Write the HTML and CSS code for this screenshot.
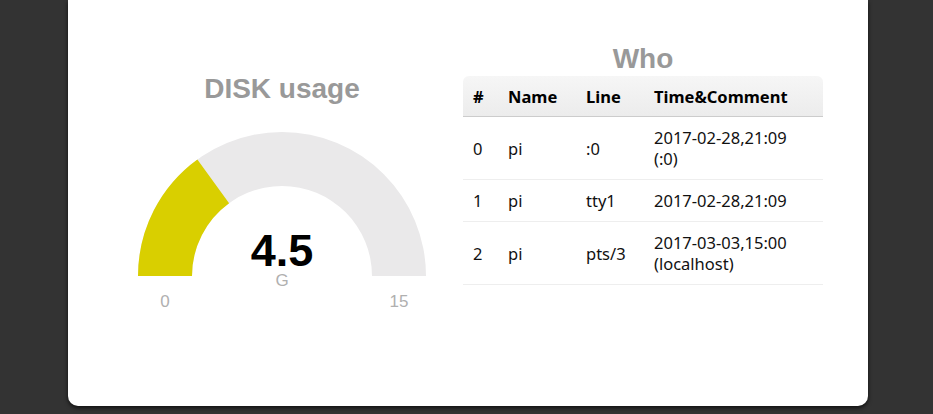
FILE: index.html
```html
<!DOCTYPE html>
<html>
<head>
<meta charset="utf-8">
<link rel="stylesheet" href="styles.css">
</head>
<body>
<div class="card">
  <section class="disk">
    <h2 class="title disk-title">DISK usage</h2>
    <svg class="gauge" width="300" height="190" viewBox="0 0 300 190">
      <path d="M6 150 A144 144 0 0 1 294 150 L240 150 A90 90 0 0 0 60 150 Z" fill="#eae9ea"/>
      <path d="M6 150 A144 144 0 0 1 65.36 33.5 L97.1 77.19 A90 90 0 0 0 60 150 Z" fill="#d9cf00"/>
      <text x="150" y="140" text-anchor="middle" class="g-value">4.5</text>
      <text x="150" y="160" text-anchor="middle" class="g-unit">G</text>
      <text x="33" y="181" text-anchor="middle" class="g-unit">0</text>
      <text x="267" y="181" text-anchor="middle" class="g-unit">15</text>
    </svg>
  </section>
  <section class="who">
    <h2 class="title who-title">Who</h2>
    <table class="who-table">
      <thead>
        <tr><th class="c-num">#</th><th class="c-name">Name</th><th class="c-line">Line</th><th class="c-time">Time&amp;Comment</th></tr>
      </thead>
      <tbody>
        <tr><td>0</td><td>pi</td><td>:0</td><td>2017-02-28,21:09<br>(:0)</td></tr>
        <tr><td>1</td><td>pi</td><td>tty1</td><td>2017-02-28,21:09</td></tr>
        <tr><td>2</td><td>pi</td><td>pts/3</td><td>2017-03-03,15:00<br>(localhost)</td></tr>
      </tbody>
    </table>
  </section>
</div>
</body>
</html>
```
FILE: styles.css
```css
html, body {
  margin: 0;
  padding: 0;
  background: #333333;
  height: 414px;
  overflow: hidden;
}
.card {
  margin: 0 65px 0 68px;
  height: 406px;
  background: #ffffff;
  border-radius: 0 0 10px 10px;
  box-shadow: 0 2px 4px rgba(0,0,0,0.7);
  display: flex;
  padding: 0 45px 0 64px;
  box-sizing: border-box;
  width: 800px;
  gap: 31px;
}
.title {
  margin: 0;
  font-family: "Liberation Sans", Arial, sans-serif;
  font-weight: bold;
  color: #999999;
  text-align: center;
  font-size: 28px;
  line-height: 32px;
}
.disk {
  width: 300px;
  display: flex;
  flex-direction: column;
  align-items: center;
  padding-top: 73px;
}
.gauge {
  display: block;
  margin-top: 21px;
}
.g-value {
  font-family: "Liberation Sans", Arial, sans-serif;
  font-weight: bold;
  font-size: 45px;
  fill: #000000;
}
.g-unit {
  font-family: "Liberation Sans", Arial, sans-serif;
  font-size: 17px;
  fill: #b0b0b0;
}
.who {
  width: 360px;
  padding-top: 43px;
}
.who-title {
  line-height: 32px;
  margin-bottom: 1px;
}
.who-table {
  width: 360px;
  border-collapse: separate;
  border-spacing: 0;
  font-family: "Noto Sans", "Open Sans", sans-serif;
  font-size: 16.5px;
  color: #111111;
}
.who-table th {
  text-align: left;
  font-weight: bold;
  color: #000;
  background: linear-gradient(#f6f6f6, #ececec);
  height: 40px;
  padding: 0 10px;
  border-bottom: 1px solid #cccccc;
}
.who-table th:first-child { border-top-left-radius: 6px; }
.who-table th:last-child { border-top-right-radius: 6px; }
.who-table td {
  padding: 10px 10px;
  line-height: 21px;
  border-bottom: 1px solid #eeeeee;
  vertical-align: middle;
}
.c-num { width: 15px; }
.c-name { width: 58px; }
.c-line { width: 48px; }
```
